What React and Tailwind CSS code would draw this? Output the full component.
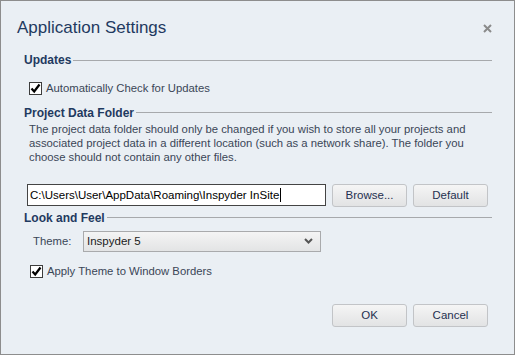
const SectionTitle = ({ children }) => (
  <div className="flex items-center gap-[2px] h-[14px]">
    <span className="font-bold text-[12px] text-[#1f3a60] leading-none whitespace-nowrap">{children}</span>
    <div className="flex-1 h-px bg-[#a7a9ac]" />
  </div>
)

const Check = ({ label }) => (
  <div className="flex items-center gap-[4px]">
    <div className="w-[13px] h-[13px] border border-[#3c3c3c] bg-white flex items-center justify-center">
      <svg width="11" height="11" viewBox="0 0 11 11">
        <path d="M1.5 5.5 L4.2 8.5 L9.5 1.5" fill="none" stroke="#000" strokeWidth="2.2" />
      </svg>
    </div>
    <span className="text-[11.3px] text-[#3a4657]">{label}</span>
  </div>
)

const Btn = ({ children }) => (
  <button className="w-[75px] h-[23px] rounded-[3px] border border-[#c2c4c7] bg-gradient-to-b from-[#f5f5f5] to-[#e2e3e4] text-[11.5px] text-[#1f3050]">
    {children}
  </button>
)

export default function App() {
  return (
    <div
      className="w-[515px] h-[355px] bg-[#eaeff4] border border-[#8d8d8d] flex flex-col"
      style={{ fontFamily: '"Liberation Sans", Arial, sans-serif' }}
    >
      <div className="flex items-center justify-between pl-[16px] pr-[22px] pt-[12px] h-[42px]">
        <span className="text-[17px] text-[#1f3a60]">Application Settings</span>
        <svg width="9" height="9" viewBox="0 0 9 9">
          <path d="M1 1 L8 8 M8 1 L1 8" stroke="#8b8b8b" strokeWidth="2" />
        </svg>
      </div>

      <div className="flex flex-col pl-[23px] pr-[22px] pt-[10px]">
        <SectionTitle>Updates</SectionTitle>
        <div className="pl-[5px] pt-[13px]">
          <Check label="Automatically Check for Updates" />
        </div>

        <div className="pt-[9px]">
          <SectionTitle>Project Data Folder</SectionTitle>
        </div>
        <p className="pl-[5px] pt-[2px] text-[11.3px] leading-[14px] text-[#3a4657]">
          The project data folder should only be changed if you wish to store all your projects and
          associated project data in a different location (such as a network share). The folder you
          choose should not contain any other files.
        </p>

        <div className="flex items-center pl-[3px] pt-[20px] gap-[6px]">
          <div className="w-[299px] h-[22px] bg-white border border-[#444] flex items-center px-[2px] text-[11.5px] text-black">
            C:\Users\User\AppData\Roaming\Inspyder InSite
            <span className="w-px h-[14px] bg-black ml-px" />
          </div>
          <Btn>Browse...</Btn>
          <Btn>Default</Btn>
        </div>

        <div className="pt-[4px]">
          <SectionTitle>Look and Feel</SectionTitle>
        </div>
        <div className="flex items-center pl-[9px] pt-[6px]">
          <span className="w-[50px] text-[11.3px] text-[#3a4657]">Theme:</span>
          <div className="w-[238px] h-[21px] border border-[#a9aaac] bg-gradient-to-b from-[#f4f4f4] to-[#e3e4e5] flex items-center justify-between pl-[3px] pr-[7px]">
            <span className="text-[11.5px] text-[#1a1a1a]">Inspyder 5</span>
            <svg width="9" height="6" viewBox="0 0 9 6">
              <path d="M1 1 L4.5 4.5 L8 1" fill="none" stroke="#555" strokeWidth="2" />
            </svg>
          </div>
        </div>
        <div className="pl-[6px] pt-[11px]">
          <Check label="Apply Theme to Window Borders" />
        </div>

        <div className="flex justify-end gap-[6px] pt-[24px] pr-[4px]">
          <Btn>OK</Btn>
          <Btn>Cancel</Btn>
        </div>
      </div>
    </div>
  )
}
